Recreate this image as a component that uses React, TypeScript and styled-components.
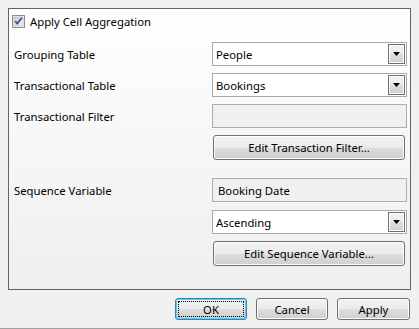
import styled, { createGlobalStyle } from 'styled-components'

const GlobalStyle = createGlobalStyle`
  html, body {
    margin: 0;
    padding: 0;
  }
  body {
    background: #f0f0f0;
    font-family: 'Noto Sans', 'Segoe UI', sans-serif;
    font-size: 11.3px;
    color: #000;
  }
`

const Window = styled.div`
  width: 419px;
  height: 329px;
  box-sizing: border-box;
  padding: 8px 8px 0;
  border-bottom: 1px solid #a0a0a0;
  display: flex;
  flex-direction: column;
`

const Panel = styled.div`
  height: 282px;
  box-sizing: border-box;
  border: 1px solid #646464;
  background: linear-gradient(to bottom, #ffffff 0%, #f8f8f8 40%, #efefef 100%);
  padding: 6px 3px 0 3px;
  display: flex;
  flex-direction: column;
`

const CheckRow = styled.label`
  display: flex;
  align-items: center;
  gap: 5px;
  height: 13px;
  line-height: 13px;
`

const Form = styled.div`
  display: flex;
  flex-direction: column;
  margin-top: 14px;
`

const FieldRow = styled.div<{ $mt: number }>`
  display: grid;
  grid-template-columns: 1fr 195px;
  align-items: center;
  margin-top: ${({ $mt }) => $mt}px;
  height: 24px;
`

const Label = styled.span`
  padding-left: 2px;
  white-space: nowrap;
`

const Combo = styled.div`
  grid-column: 2;
  height: 24px;
  box-sizing: border-box;
  border: 1px solid #a9a9a9;
  background: #fff;
  display: flex;
  align-items: center;
  padding: 1px 1px 1px 3px;
`

const ComboText = styled.span`
  flex: 1;
`

const DropButton = styled.span`
  width: 17px;
  height: 20px;
  box-sizing: border-box;
  border: 1px solid #707070;
  box-shadow: inset 0 0 0 1px #fcfcfc;
  background: linear-gradient(to bottom, #f2f2f2 0%, #ebebeb 50%, #dddddd 51%, #cfcfcf 100%);
  display: flex;
  align-items: center;
  justify-content: center;
`

const ReadOnlyBox = styled.div`
  grid-column: 2;
  height: 24px;
  box-sizing: border-box;
  border: 1px solid #adadad;
  background: #f0f0f0;
  display: flex;
  align-items: center;
  padding-left: 5px;
`

const Button = styled.button<{ $default?: boolean }>`
  position: relative;
  font: inherit;
  color: #000;
  box-sizing: border-box;
  border: 1px solid ${({ $default }) => ($default ? '#3c7fb1' : '#707070')};
  border-radius: 3px;
  background: linear-gradient(to bottom, #f2f2f2 0%, #ebebeb 50%, #dddddd 51%, #cfcfcf 100%);
  box-shadow: inset 0 0 0 1px ${({ $default }) => ($default ? '#48d8fb' : '#fcfcfc')};
  padding: 0;
  display: flex;
  align-items: center;
  justify-content: center;

  &::after {
    content: '';
    display: ${({ $default }) => ($default ? 'block' : 'none')};
    position: absolute;
    inset: 2px;
    border: 1px dotted #000;
  }
`

const WideButton = styled(Button)`
  grid-column: 2;
  height: 25px;
  width: 192px;
  margin-left: 1px;
`

const Footer = styled.div`
  display: flex;
  justify-content: flex-end;
  gap: 9px;
  padding: 8px 1px 0 0;
`

const FooterButton = styled(Button)<{ $w: number }>`
  width: ${({ $w }) => $w}px;
  height: 22px;
`

function Checkbox() {
  return (
    <svg width="13" height="13" viewBox="0 0 13 13">
      <defs>
        <linearGradient id="cbfill" x1="0" y1="0" x2="1" y2="1">
          <stop offset="0" stopColor="#cbcfd5" />
          <stop offset="1" stopColor="#f6f6f6" />
        </linearGradient>
      </defs>
      <rect x="0.5" y="0.5" width="12" height="12" fill="#f4f4f4" stroke="#8e8f8f" />
      <rect x="2" y="2" width="9" height="9" fill="url(#cbfill)" stroke="#aeb3b9" strokeWidth="0.6" />
      <path d="M3.2 6.3 L5.3 8.6 L9.8 2.8" fill="none" stroke="#3c4e86" strokeWidth="1.7" />
    </svg>
  )
}

function Arrow() {
  return (
    <svg width="7" height="4" viewBox="0 0 7 4">
      <polygon points="0,0 7,0 3.5,4" fill="#000" />
    </svg>
  )
}

function ComboBox({ value }: { value: string }) {
  return (
    <Combo>
      <ComboText>{value}</ComboText>
      <DropButton>
        <Arrow />
      </DropButton>
    </Combo>
  )
}

export default function App() {
  return (
    <>
      <GlobalStyle />
      <Window>
        <Panel>
          <CheckRow>
            <Checkbox />
            Apply Cell Aggregation
          </CheckRow>

          <Form>
            <FieldRow $mt={0}>
              <Label>Grouping Table</Label>
              <ComboBox value="People" />
            </FieldRow>
            <FieldRow $mt={7}>
              <Label>Transactional Table</Label>
              <ComboBox value="Bookings" />
            </FieldRow>
            <FieldRow $mt={7}>
              <Label>Transactional Filter</Label>
              <ReadOnlyBox />
            </FieldRow>
            <FieldRow $mt={7}>
              <WideButton>Edit Transaction Filter...</WideButton>
            </FieldRow>
            <FieldRow $mt={19}>
              <Label>Sequence Variable</Label>
              <ReadOnlyBox>Booking Date</ReadOnlyBox>
            </FieldRow>
            <FieldRow $mt={8}>
              <ComboBox value="Ascending" />
            </FieldRow>
            <FieldRow $mt={7}>
              <WideButton>Edit Sequence Variable...</WideButton>
            </FieldRow>
          </Form>
        </Panel>

        <Footer>
          <FooterButton $default $w={72}>OK</FooterButton>
          <FooterButton $w={72}>Cancel</FooterButton>
          <FooterButton $w={73}>Apply</FooterButton>
        </Footer>
      </Window>
    </>
  )
}
